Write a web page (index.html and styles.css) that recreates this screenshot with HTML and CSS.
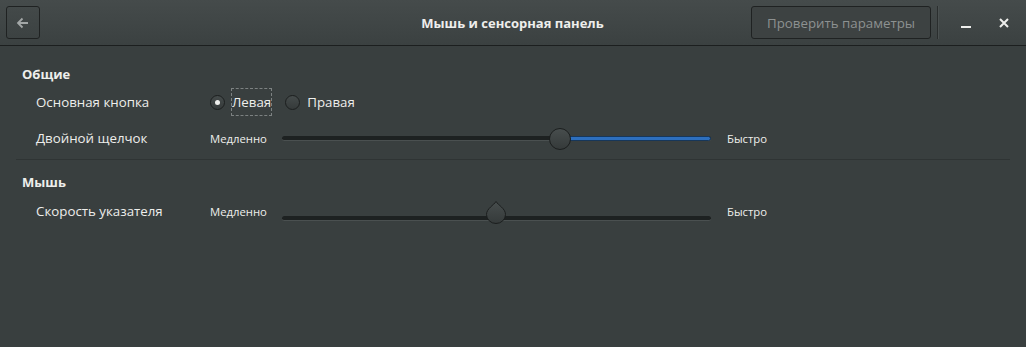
FILE: index.html
```html
<!DOCTYPE html>
<html lang="ru">
<head>
  <meta charset="UTF-8">
  <title>Мышь и сенсорная панель</title>
  <link rel="stylesheet" href="styles.css">
</head>
<body>
  <div class="window">
    <div class="headerbar">
      <button class="back-button" aria-label="Назад">
        <svg width="14" height="12" viewBox="0 0 14 12">
          <path d="M12 6H2.5M6.5 1.5L2 6l4.5 4.5" fill="none" stroke="#a3a7a7" stroke-width="1.8"/>
        </svg>
      </button>
      <div class="title">Мышь и сенсорная панель</div>
      <button class="test-button" disabled>Проверить параметры</button>
      <div class="header-sep"></div>
      <button class="wm-button" aria-label="Свернуть">
        <svg width="12" height="12" viewBox="0 0 12 12"><rect x="1" y="9" width="10" height="2" fill="#eeeeec"/></svg>
      </button>
      <button class="wm-button" aria-label="Закрыть">
        <svg width="12" height="12" viewBox="0 0 12 12"><path d="M2 2l8 8M10 2l-8 8" stroke="#eeeeec" stroke-width="2"/></svg>
      </button>
    </div>

    <div class="content">
      <div class="section">
        <h2 class="section-title">Общие</h2>
        <div class="row">
          <div class="row-label">Основная кнопка</div>
          <div class="row-control">
            <label class="radio checked"><span class="radio-dot"></span><span class="radio-text focused">Левая</span></label>
            <label class="radio"><span class="radio-dot"></span><span class="radio-text">Правая</span></label>
          </div>
        </div>
        <div class="row">
          <div class="row-label">Двойной щелчок</div>
          <div class="row-control">
            <span class="scale-end">Медленно</span>
            <div class="scale">
              <div class="trough"></div>
              <div class="fill" style="left: 278px;"></div>
              <div class="knob round" style="left: 267px;"></div>
            </div>
            <span class="scale-end">Быстро</span>
          </div>
        </div>
      </div>

      <div class="separator"></div>

      <div class="section">
        <h2 class="section-title">Мышь</h2>
        <div class="row pointer-row">
          <div class="row-label">Скорость указателя</div>
          <div class="row-control">
            <span class="scale-end">Медленно</span>
            <div class="scale marked">
              <div class="trough"></div>
              <svg class="knob drop" style="left: 203px;" width="22" height="24" viewBox="0 0 22 24">
                <defs>
                  <linearGradient id="kg" x1="0" y1="0" x2="0" y2="1">
                    <stop offset="0" stop-color="#474d4d"/>
                    <stop offset="1" stop-color="#353a3a"/>
                  </linearGradient>
                </defs>
                <path d="M11 1.5C13 5 20.5 8.5 20.5 14.5a9.5 9 0 0 1-19 0C1.5 8.5 9 5 11 1.5z" fill="url(#kg)" stroke="#1b1e1e" stroke-width="1"/>
              </svg>
            </div>
            <span class="scale-end">Быстро</span>
          </div>
        </div>
      </div>
    </div>
  </div>
</body>
</html>
```

FILE: styles.css
```css
/* dark settings panel */
body {
  margin: 0;
  background-color: #393f3f;
  font-family: "Open Sans", "DejaVu Sans", sans-serif;
  color: #eeeeec;
}

.window {
  width: 1026px;
  height: 347px;
  overflow: hidden;
  background-color: #393f3f;
}

.headerbar {
  display: flex;
  align-items: center;
  height: 45px;
  padding: 0 6px;
  border-bottom: 1px solid #1c1f1f;
  background: linear-gradient(#454b4b, #3b4141);
  box-sizing: content-box;
}

.back-button {
  width: 34px;
  height: 33px;
  padding: 0;
  border: 1px solid #1f2222;
  border-radius: 3px;
  background: linear-gradient(#434949, #3c4242);
  display: flex;
  align-items: center;
  justify-content: center;
}

.title {
  flex: 1;
  text-align: center;
  font-weight: bold;
  font-size: 13px;
  padding-left: 250px;
  margin-right: 16px;
}

.test-button {
  height: 33px;
  width: 180px;
  padding: 0;
  border: 1px solid #1f2222;
  border-radius: 3px;
  background-color: #3d4242;
  color: #8d9191;
  font-family: inherit;
  font-size: 13.3px;
}

.header-sep {
  width: 1px;
  height: 33px;
  margin: 0 5px 0 6px;
  background-color: #2a2e2e;
  border-right: 1px solid #4a5050;
}

.wm-button {
  width: 32px;
  height: 33px;
  margin-left: 6px;
  padding: 0;
  border: none;
  background: none;
  display: flex;
  align-items: center;
  justify-content: center;
}

.content {
  padding: 18px 16px 0 16px;
}

.section-title {
  margin: 0;
  padding-left: 6px;
  font-size: 13px;
  font-weight: bold;
  line-height: 20px;
}

.row {
  display: flex;
  align-items: center;
  height: 36px;
  font-size: 13.3px;
}

.pointer-row {
  margin-top: 1px;
}

.row-label {
  width: 174px;
  padding-left: 20px;
}

.row-control {
  display: flex;
  align-items: center;
}

.radio {
  display: flex;
  align-items: center;
  margin-right: 13px;
}

.radio-dot {
  width: 13px;
  height: 13px;
  border: 1px solid #1c1f1f;
  border-radius: 50%;
  background: linear-gradient(#454b4b, #353a3a);
  position: relative;
  margin: 0 6px 0 0;
}

.radio.checked .radio-dot::after {
  content: "";
  position: absolute;
  left: 4px;
  top: 4px;
  width: 5px;
  height: 5px;
  border-radius: 50%;
  background-color: #eeeeec;
}

.radio-text {
  padding: 4px 0;
  border: 1px dashed transparent;
}

.radio-text.focused {
  border-color: #7d8282;
}

.scale-end {
  font-size: 11.3px;
  width: 57px;
}

.scale {
  position: relative;
  width: 429px;
  height: 24px;
  margin: 0 16px 0 15px;
}

.trough {
  position: absolute;
  left: 0;
  right: 0;
  top: 10px;
  height: 5px;
  border-radius: 3px;
  background-color: #1d2121;
  border-bottom: 1px solid #4a5050;
  box-sizing: border-box;
}

.fill {
  position: absolute;
  right: 0;
  top: 10px;
  height: 5px;
  border-radius: 3px;
  background-color: #2d6fbe;
  border: 1px solid #17375a;
  box-sizing: border-box;
}

.knob {
  position: absolute;
}

.knob.round {
  top: 2px;
  width: 20px;
  height: 20px;
  border-radius: 50%;
  border: 1px solid #1b1e1e;
  background: linear-gradient(#474d4d, #353a3a);
}

.scale.marked {
  top: 7px;
}

.scale.marked .knob.drop {
  top: -6px;
}

.separator {
  height: 1px;
  margin: 3px 0 12px 0;
  background-color: #2f3434;
}
```
